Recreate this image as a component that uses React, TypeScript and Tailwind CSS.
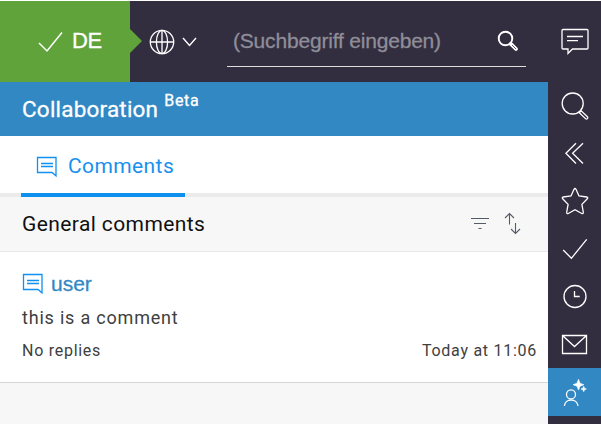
import type { ReactNode } from "react";

const sidebarItems: { id: string; active?: boolean; icon: ReactNode }[] = [
  {
    id: "search",
    icon: (
      <>
        <circle cx="24.7" cy="23.5" r="10.5" />
        <path d="M31.3 32.7l1.9-1.9 6.2 5.9a1.3 1.3 0 0 1-1.9 1.9z" />
      </>
    ),
  },
  {
    id: "collapse",
    icon: <path d="M28 15.2L17.9 25.3 28 35.5M35 15.2L24.6 25.3 35 35.5" />,
  },
  {
    id: "favorites",
    icon: (
      <path d="M26 13.3q1-1.6 2 0l3 6.6 7.7 1.1q1.8.4.6 1.8l-5.4 5.6 1.4 7.8q.1 1.9-1.6 1.3L27 33.8 20.3 37.5q-1.7.6-1.6-1.3l1.4-7.8-5.4-5.6q-1.2-1.4.6-1.8l7.7-1.1z" />
    ),
  },
  { id: "tasks", icon: <path d="M15.2 26l8.2 8.3L38.7 15.3" /> },
  {
    id: "history",
    icon: (
      <>
        <circle cx="27" cy="24.5" r="11" />
        <path d="M26.5 19v5.5h5.2" />
      </>
    ),
  },
  {
    id: "mail",
    icon: <path d="M14.5 15.5h24v18h-24zl12 11 12-11" />,
  },
  {
    id: "collaboration",
    active: true,
    icon: (
      <>
        <circle cx="23" cy="26.4" r="4.5" />
        <path d="M16.4 38c.6-8 12.8-8 13.6 0" />
        <path
          d="M30.5 11.3l1.5 3.9 3.9 1.5-3.9 1.5-1.5 3.9-1.5-3.9-3.9-1.5 3.9-1.5zM35.7 18.3l.8 1.9 1.9.8-1.9.8-.8 1.9-.8-1.9-1.9-.8 1.9-.8z"
          fill="white"
          stroke="white"
          strokeWidth="0.6"
        />
      </>
    ),
  },
];

function CommentIcon() {
  return (
    <svg viewBox="0 0 22 22" className="w-[22px] h-[22px]" fill="none" stroke="#1090f0" strokeWidth="1.3">
      <path d="M1.5 1.5H20v18.300l-4-3.300H1.500z" />
      <path d="M5 7.500h12M5 10.500h12" />
    </svg>
  );
}

function Header() {
  return (
    <header className="flex bg-[#322e40] h-[81px] text-white">
      <div className="relative flex items-center bg-[#60a33b] pl-[38px] w-[130px]">
        <svg viewBox="0 0 26 22" className="w-[26px] h-[22px]" fill="none" stroke="white" strokeWidth="1.5">
          <path d="M1 12l8 8L24 1.5" />
        </svg>
        <span className="ml-2 pb-0.5 font-['Liberation_Sans',sans-serif] text-[22px] tracking-[-0.3px] leading-none [-webkit-text-stroke:0.3px]">
          DE
        </span>
        <svg viewBox="0 0 13 26" className="top-[27px] left-[129px] absolute w-[13px] h-[26px]">
          <path d="M0 0L13 13 0 26z" fill="#60a33b" />
        </svg>
      </div>
      <div className="flex items-center ml-[19px] w-[78px]">
        <svg viewBox="0 0 26 26" className="w-[26px] h-[26px]" fill="none" stroke="white" strokeWidth="1.3">
          <circle cx="13" cy="13" r="11.7" />
          <ellipse cx="13" cy="13" rx="5.6" ry="11.7" />
          <path d="M1.3 13h23.4M13 1.3v23.4" />
        </svg>
        <svg viewBox="0 0 16 12" className="ml-[7px] w-4 h-3" fill="none" stroke="white" strokeWidth="1.4">
          <path d="M1 2l6.500 7.500L14 2" />
        </svg>
      </div>
      <div className="flex justify-between items-center mt-3.5 pr-[7px] pl-1.5 border-[#dddddd] border-b w-[299px] h-[52px]">
        <span className="font-['Liberation_Sans',sans-serif] text-[#8f8d98] text-[21px] tracking-[-0.19px] leading-none [-webkit-text-stroke:0.3px]">
          (Suchbegriff eingeben)
        </span>
        <svg viewBox="0 0 22 22" className="w-[22px] h-[22px]" fill="none" stroke="white">
          <circle cx="8.5" cy="8.5" r="6.8" strokeWidth="1.9" />
          <path d="M13.8 13.8l5.200 5.200" strokeWidth="3.8" strokeLinecap="round" />
          <path d="M15 15l4 4" stroke="#322e40" strokeWidth="0.8" />
        </svg>
      </div>
    </header>
  );
}

function Panel() {
  return (
    <main className="flex flex-col flex-1 bg-[#f7f7f7]">
      <div className="bg-[#3288c3] pt-3.5 pl-[22px] h-[54px] text-white">
        <h1 className="flex text-[22.5px] leading-[26px] tracking-[0.2px] [-webkit-text-stroke:0.3px]">
          Collaboration
          <span className="-mt-[7px] ml-1.5 text-base tracking-[0.7px]">Beta</span>
        </h1>
      </div>
      <div className="bg-white pl-[21px] h-[61px] shadow-[inset_0_-4px_#ebebec]">
        <div className="flex items-center pl-[15px] border-[#0d90ee] border-b-4 w-[164px] h-full text-[#1890ee]">
          <div className="pt-1">
            <CommentIcon />
          </div>
          <span className="ml-2.5 pt-1 text-[21px] tracking-[0.4px]">Comments</span>
        </div>
      </div>
      <div className="flex items-center pl-[22px] border-[#e8e8e8] border-b h-[55px]">
        <h2 className="pt-0.5 text-[#101010] text-[21px] tracking-[0.4px]">General comments</h2>
        <div className="flex ml-auto pr-[26px]">
          <svg viewBox="0 0 20 24" className="w-5 h-6" fill="none" stroke="#555c68" strokeWidth="1.1">
            <path d="M1 6.500h18M4 11.500h12M8.500 16.500h3" />
          </svg>
          <svg viewBox="0 0 18 24" className="ml-3.5 w-[18px] h-6" fill="none" stroke="#555c68" strokeWidth="1.1">
            <path d="M5.500 12.500v-11M1 6l4.500-4.500L10 6M11.500 11v10.500M7 17l4.500 4.500L16 17" />
          </svg>
        </div>
      </div>
      <article className="bg-white pt-5 pr-[11px] pl-[22px] border-[#d5d7d7] border-b h-[131px]">
        <div className="flex items-center h-6">
          <CommentIcon />
          <span className="ml-[7px] font-['Liberation_Sans',sans-serif] text-[#3288c3] text-[21px] leading-6 [-webkit-text-stroke:0.3px]">
            user
          </span>
        </div>
        <p className="mt-2.5 text-[#404040] text-lg leading-6 tracking-[0.8px]">this is a comment</p>
        <div className="flex justify-between mt-[9px] text-[#404040] text-base leading-6 tracking-[0.73px]">
          <span>No replies</span>
          <span>Today at 11:06</span>
        </div>
      </article>
    </main>
  );
}

export default function App() {
  return (
    <div className="flex bg-white pt-px w-[601px] h-[424px] overflow-hidden font-[Roboto,sans-serif]">
      <div className="flex flex-col w-[548px]">
        <Header />
        <Panel />
      </div>
      <nav className="bg-[#322e40] w-[53px]">
        <svg viewBox="0 1 53 79" className="block w-[53px] h-[79px]" fill="none" stroke="white" strokeWidth="1.3">
          <path d="M15 29.500h24q1 0 1 1v17.500q0 1-1 1H24.500l-4.500 4.500V49h-5q-1 0-1-1V30.500q0-1 1-1z" />
          <path d="M19 36.500h16M19 40.700h11" />
        </svg>
        {sidebarItems.map((item) => (
          <button key={item.id} className={item.active ? "block bg-[#3288c3]" : "block"}>
            <svg viewBox="0 0 53 48" className="block w-[53px] h-12" fill="none" stroke="white" strokeWidth="1.3">
              {item.icon}
            </svg>
          </button>
        ))}
      </nav>
    </div>
  );
}
